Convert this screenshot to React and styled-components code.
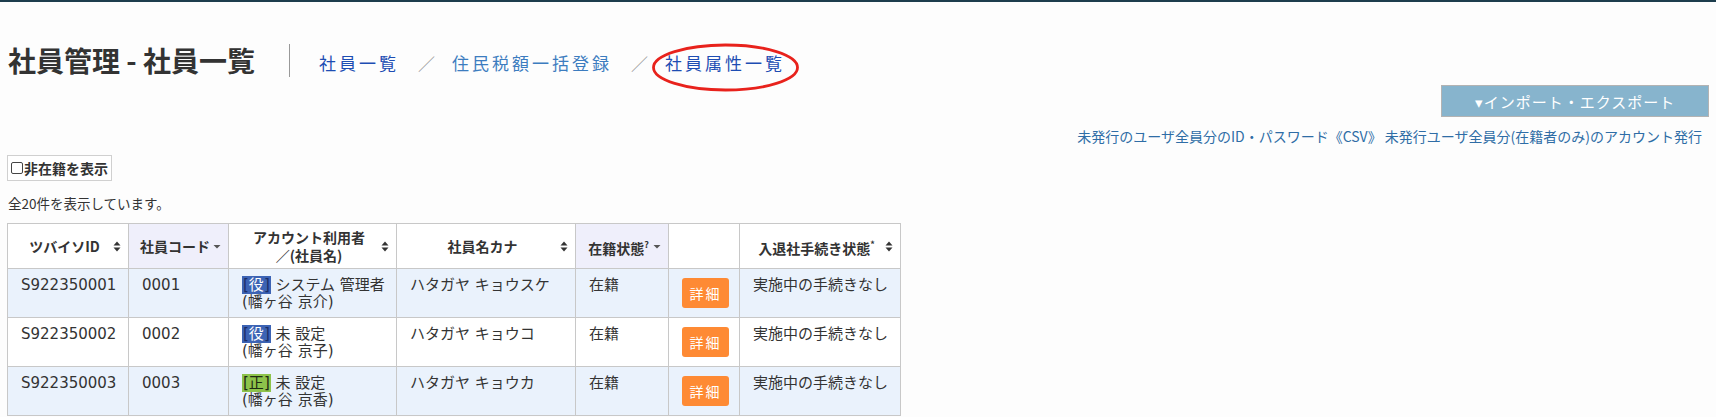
import styled, { createGlobalStyle } from "styled-components";

const GlobalStyle = createGlobalStyle`
  body {
    margin: 0;
    background: #fdfdfd;
    color: #333;
    font-family: "Noto Sans CJK JP", "Noto Sans", sans-serif;
  }
`;

// page frame with the dark line on top
const Page = styled.div`
  border-top: 2px solid #1d3d4d;
  padding: 0 7px;
`;

const HeaderRow = styled.div`
  display: flex;
  align-items: center;
  padding: 41px 0 0 1px;
`;

const Title = styled.h1`
  margin: 0;
  font-size: 28px;
  font-weight: bold;
  line-height: 34px;
  color: #333;
`;

const Crumbs = styled.nav`
  display: flex;
  align-items: center;
  box-sizing: border-box;
  height: 33px;
  margin-left: 34px;
  padding: 6px 0 0 29px;
  border-left: 1px solid #999;
`;

const Crumb = styled.a`
  position: relative;
  font-size: 17px;
  line-height: 24px;
  letter-spacing: 3px;
  color: ${(p) => (p.$light ? "#3c7cbf" : "#1d4db3")};
  text-decoration: none;
`;

const Slash = styled.span`
  margin: 0 17px 0 19px;
  font-size: 17px;
  color: #999;
`;

// red hand-drawn circle around the current crumb
const Mark = styled.svg`
  position: absolute;
  left: -13px;
  top: -8px;
  width: 147px;
  height: 49px;
  overflow: visible;
  pointer-events: none;
`;

const Tools = styled.div`
  display: flex;
  flex-direction: column;
  align-items: flex-end;
  margin-top: 8px;
`;

const ImportButton = styled.button`
  width: 268px;
  height: 32px;
  background: #87b4cd;
  border: 1px solid #b3b3b3;
  color: #fff;
  font-family: inherit;
  font-size: 15px;
  letter-spacing: 1px;
  cursor: pointer;
`;

const LinkRow = styled.div`
  margin: 9px 7px 0 0;
  font-size: 14px;
  line-height: 20px;
  a {
    color: #2f6da6;
    text-decoration: none;
  }
`;

const Toggle = styled.label`
  display: inline-flex;
  align-items: center;
  box-sizing: border-box;
  height: 26px;
  margin-top: 9px;
  padding: 0 3px;
  border: 1px solid #d0d0d0;
  background: #fff;
  font-size: 14px;
  font-weight: bold;
  color: #333;
`;

const Check = styled.input`
  appearance: none;
  width: 12px;
  height: 12px;
  margin: 0 1px 0 0;
  border: 1px solid #444;
  border-radius: 2px;
  background: #fff;
`;

const Count = styled.p`
  margin: 13px 0 0 1px;
  font-size: 13.5px;
  line-height: 18px;
`;

const Table = styled.table`
  margin-top: 11px;
  border-collapse: collapse;
  table-layout: fixed;
  width: 893px;
  font-family: "DejaVu Sans", "Noto Sans CJK JP", sans-serif;
  font-size: 15px;
  color: #333;
`;

const Th = styled.th`
  height: 44px;
  padding: 0 7px 0 8px;
  border: 1px solid #c8c8c8;
  background: ${(p) => (p.$sorted ? "#efeffb" : "#fff")};
  font-family: "Noto Sans CJK JP", sans-serif;
  font-size: 14px;
  font-weight: bold;
  line-height: 18px;
  vertical-align: middle;
`;

const HeadInner = styled.div`
  display: flex;
  align-items: center;
`;

const HeadLabel = styled.span`
  flex: 1;
  text-align: center;
  sup {
    font-size: 9px;
    vertical-align: 6px;
  }
`;

const Row = styled.tr`
  height: 49px;
  background: ${(p) => (p.$odd ? "#eaf2fc" : "#fff")};
`;

const Td = styled.td`
  padding: 8px 10px 0 13px;
  border: 1px solid #c8c8c8;
  line-height: 17px;
  vertical-align: top;
  text-align: ${(p) => (p.$center ? "center" : "left")};
`;

const Badge = styled.span`
  padding: 0 1px;
  background: ${(p) => (p.$kind === "role" ? "#3c63b4" : "#8dc34b")};
  color: ${(p) => (p.$kind === "role" ? "#1b2d66" : "#1e2a12")};
  b {
    font-weight: normal;
    color: ${(p) => (p.$kind === "role" ? "#fff" : "#1e2a12")};
  }
`;

const DetailButton = styled.button`
  width: 47px;
  height: 30px;
  margin-top: 1px;
  border: none;
  border-radius: 3px;
  background: #fe8a34;
  color: #fff;
  font-family: "Noto Sans CJK JP", sans-serif;
  font-size: 14px;
  letter-spacing: 2px;
  cursor: pointer;
`;

const SortBoth = () => (
  <svg width="8" height="11" viewBox="0 0 8 11">
    <path d="M4 0.5 L7.5 4.5 L0.5 4.5 Z M4 10.5 L7.5 6.5 L0.5 6.5 Z" fill="#333" />
  </svg>
);

const SortDown = () => (
  <svg width="8" height="11" viewBox="0 0 8 11">
    <path d="M0.5 4 L7.5 4 L4 7.5 Z" fill="#555" />
  </svg>
);

const columns = [
  { label: "ツバイソID", width: 121 },
  { label: "社員コード", width: 100, sorted: true },
  { label: <>アカウント利用者<br />／(社員名)</>, width: 168 },
  { label: "社員名カナ", width: 179 },
  { label: <>在籍状態<sup>?</sup></>, width: 93, sorted: true },
  { label: "", width: 71, plain: true },
  { label: <>入退社手続き状態<sup>*</sup></>, width: 161 },
];

const employees = [
  { id: "S922350001", code: "0001", kind: "role", tag: "役", user: "システム 管理者", name: "幡ヶ谷 京介", kana: "ハタガヤ キョウスケ" },
  { id: "S922350002", code: "0002", kind: "role", tag: "役", user: "未 設定", name: "幡ヶ谷 京子", kana: "ハタガヤ キョウコ" },
  { id: "S922350003", code: "0003", kind: "regular", tag: "正", user: "未 設定", name: "幡ヶ谷 京香", kana: "ハタガヤ キョウカ" },
];

export default function App() {
  return (
    <>
      <GlobalStyle />
      <Page>
        <HeaderRow>
          <Title>社員管理 - 社員一覧</Title>
          <Crumbs>
            <Crumb href="#">社員一覧</Crumb>
            <Slash>／</Slash>
            <Crumb href="#" $light>住民税額一括登録</Crumb>
            <Slash>／</Slash>
            <Crumb href="#">
              社員属性一覧
              <Mark viewBox="0 0 147 49">
                <ellipse cx="73.5" cy="24.5" rx="72" ry="22.5" fill="none" stroke="#e8221c" strokeWidth="2.8" />
              </Mark>
            </Crumb>
          </Crumbs>
        </HeaderRow>

        <Tools>
          <ImportButton>▾インポート・エクスポート</ImportButton>
          <LinkRow>
            <a href="#">未発行のユーザ全員分のID・パスワード《CSV》</a>{" "}
            <a href="#">未発行ユーザ全員分(在籍者のみ)のアカウント発行</a>
          </LinkRow>
        </Tools>

        <Toggle>
          <Check type="checkbox" />
          非在籍を表示
        </Toggle>

        <Count>全20件を表示しています。</Count>

        <Table>
          <colgroup>
            {columns.map((c, i) => (
              <col key={i} style={{ width: c.width }} />
            ))}
          </colgroup>
          <thead>
            <tr>
              {columns.map((c, i) => (
                <Th key={i} $sorted={c.sorted}>
                  {!c.plain && (
                    <HeadInner>
                      <HeadLabel>{c.label}</HeadLabel>
                      {c.sorted ? <SortDown /> : <SortBoth />}
                    </HeadInner>
                  )}
                </Th>
              ))}
            </tr>
          </thead>
          <tbody>
            {employees.map((e, i) => (
              <Row key={e.id} $odd={i % 2 === 0}>
                <Td>{e.id}</Td>
                <Td>{e.code}</Td>
                <Td>
                  <Badge $kind={e.kind}>[<b>{e.tag}</b>]</Badge> {e.user}
                  <br />({e.name})
                </Td>
                <Td>{e.kana}</Td>
                <Td>在籍</Td>
                <Td $center>
                  <DetailButton>詳細</DetailButton>
                </Td>
                <Td>実施中の手続きなし</Td>
              </Row>
            ))}
          </tbody>
        </Table>
      </Page>
    </>
  );
}
